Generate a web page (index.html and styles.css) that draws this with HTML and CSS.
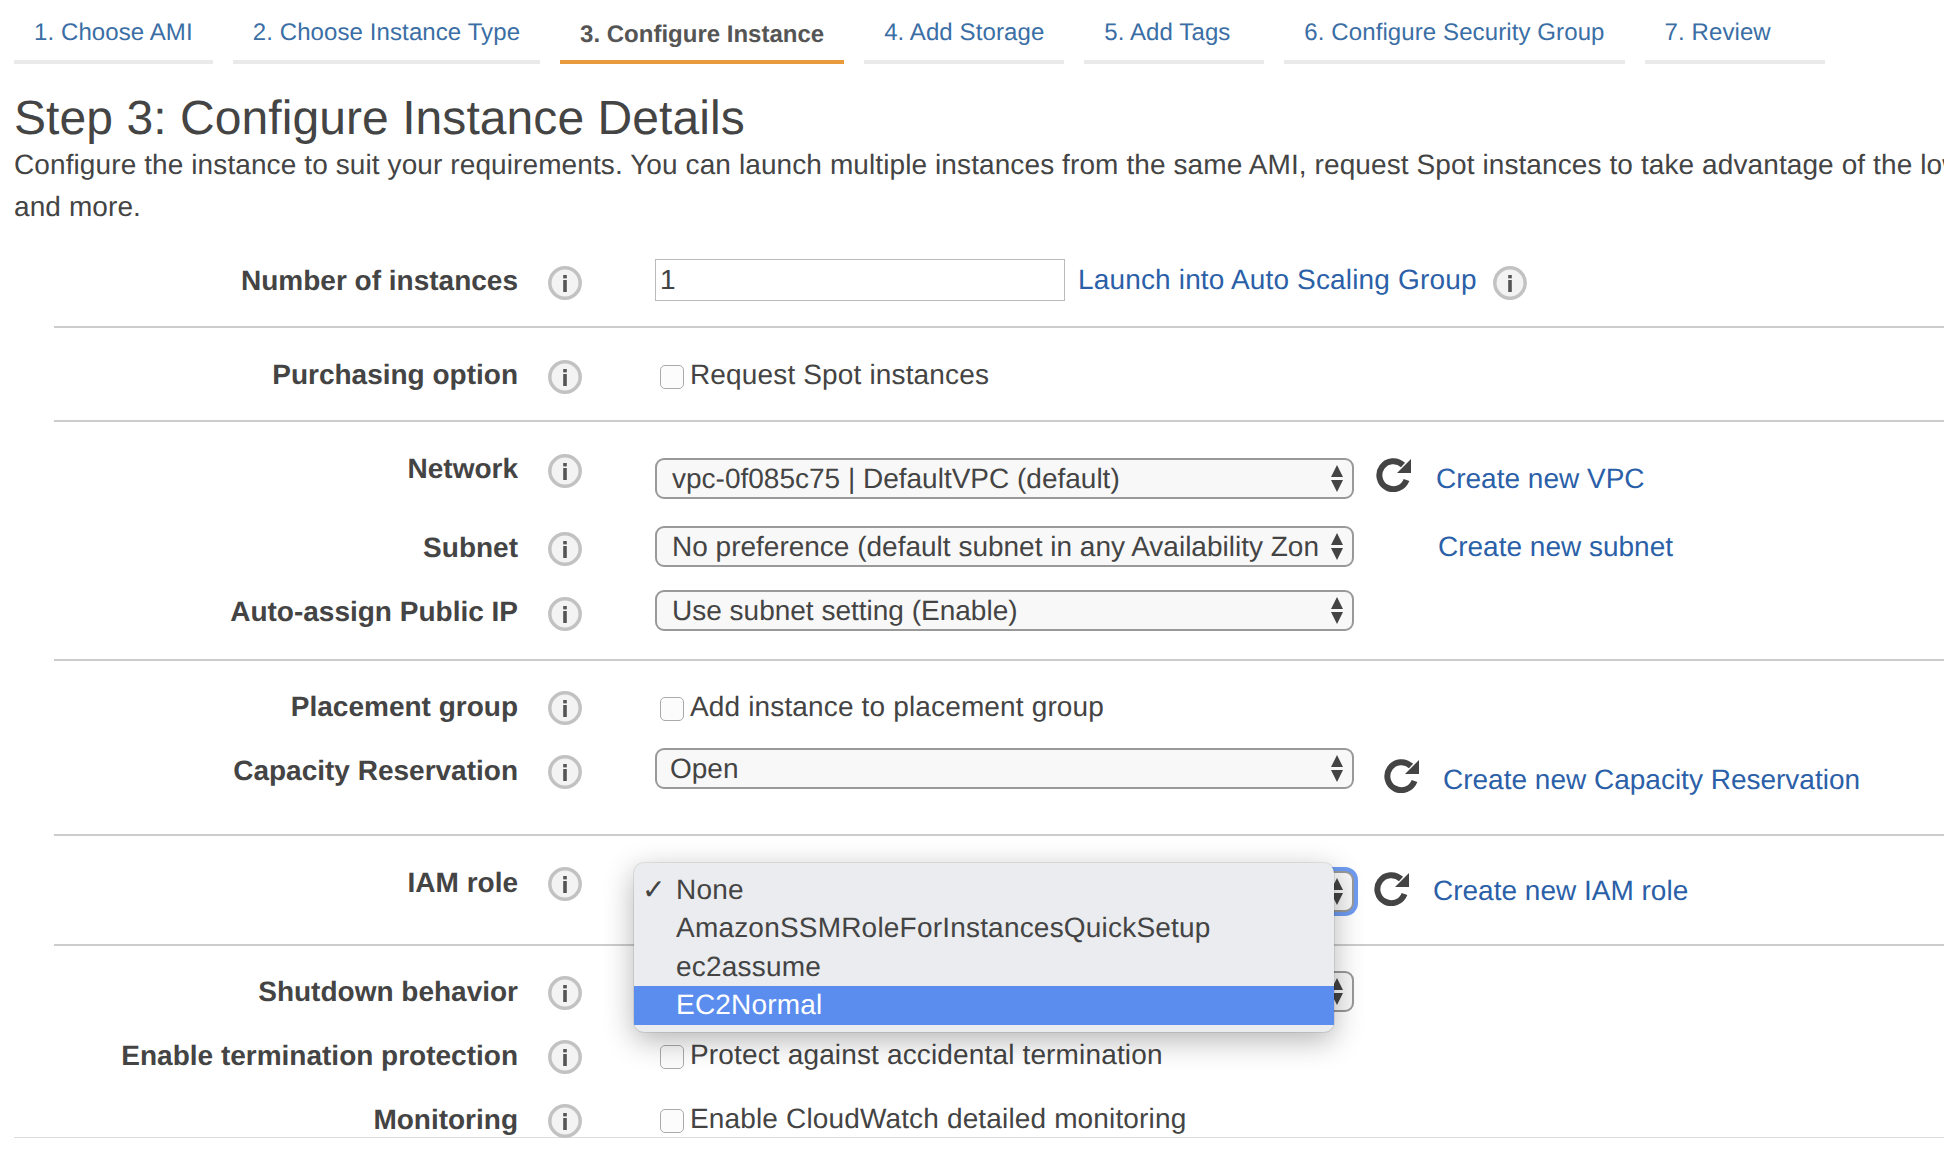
FILE: index.html
```html
<!DOCTYPE html>
<html lang="en">
<head>
    <meta charset="UTF-8">
    <title>Step 3: Configure Instance Details</title>
    <link rel="stylesheet" href="styles.css">
</head>
<body>

<svg class="defs" width="0" height="0">
    <symbol id="info" viewBox="0 0 34 34">
        <circle cx="17" cy="17" r="15.2" fill="#f3f3f3" stroke="#c2c2c2" stroke-width="3.5"/>
        <rect x="15.2" y="14" width="3.6" height="12" fill="#555"/>
        <rect x="15.2" y="9" width="3.6" height="3.4" fill="#555"/>
    </symbol>
    <symbol id="refresh" viewBox="0 0 36 34">
        <path d="M30.5 22a14 14 0 1 1-3.5-15" fill="none" stroke="#444" stroke-width="6"/>
        <path d="M35 1v14h-14z" fill="#444"/>
    </symbol>
    <symbol id="arrows" viewBox="0 0 12 27">
        <path d="M6 0l6 12h-12zM6 27l-6-12h12z" fill="#444"/>
    </symbol>
</svg>

<ul class="tabs">
    <li><a href="#">1. Choose AMI</a></li>
    <li><a href="#">2. Choose Instance Type</a></li>
    <li class="active"><a href="#">3. Configure Instance</a></li>
    <li><a href="#">4. Add Storage</a></li>
    <li><a href="#">5. Add Tags</a></li>
    <li><a href="#">6. Configure Security Group</a></li>
    <li><a href="#">7. Review</a></li>
</ul>

<h1>Step 3: Configure Instance Details</h1>
<p class="intro">Configure the instance to suit your requirements. You can launch multiple instances from the same AMI, request Spot instances to take advantage of the lower pricing, assign an access management role to the instance,<br>and more.</p>

<form class="details">
    <section class="group">
        <div class="row row-instances">
            <label>Number of instances</label>
            <svg class="info"><use href="#info"/></svg>
            <div class="control">
                <input class="count" type="text" value="1">
                <a class="link launch" href="#">Launch into Auto Scaling Group</a>
                <svg class="info info-inline"><use href="#info"/></svg>
            </div>
        </div>
    </section>

    <section class="group group-purchasing">
        <div class="row row-purchasing">
            <label>Purchasing option</label>
            <svg class="info"><use href="#info"/></svg>
            <div class="control control-text"><span class="check"></span>Request Spot instances</div>
        </div>
    </section>

    <section class="group group-network">
        <div class="row row-network">
            <label>Network</label>
            <svg class="info"><use href="#info"/></svg>
            <div class="control">
                <div class="select"><span class="value">vpc-0f085c75 | DefaultVPC (default)</span><svg class="arrows"><use href="#arrows"/></svg></div>
                <svg class="refresh"><use href="#refresh"/></svg>
                <a class="link link-vpc" href="#">Create new VPC</a>
            </div>
        </div>
        <div class="row row-subnet">
            <label>Subnet</label>
            <svg class="info"><use href="#info"/></svg>
            <div class="control">
                <div class="select"><span class="value">No preference (default subnet in any Availability Zone)</span><svg class="arrows"><use href="#arrows"/></svg></div>
                <a class="link link-subnet" href="#">Create new subnet</a>
            </div>
        </div>
        <div class="row row-public-ip">
            <label>Auto-assign Public IP</label>
            <svg class="info"><use href="#info"/></svg>
            <div class="control">
                <div class="select"><span class="value">Use subnet setting (Enable)</span><svg class="arrows"><use href="#arrows"/></svg></div>
            </div>
        </div>
    </section>

    <section class="group group-placement">
        <div class="row row-placement">
            <label>Placement group</label>
            <svg class="info"><use href="#info"/></svg>
            <div class="control control-text"><span class="check"></span>Add instance to placement group</div>
        </div>
        <div class="row row-capacity">
            <label>Capacity Reservation</label>
            <svg class="info"><use href="#info"/></svg>
            <div class="control control-top">
                <div class="select select-open"><span class="value">Open</span><svg class="arrows"><use href="#arrows"/></svg></div>
                <svg class="refresh refresh-capacity"><use href="#refresh"/></svg>
                <a class="link link-capacity" href="#">Create new Capacity Reservation</a>
            </div>
        </div>
    </section>

    <section class="group group-iam">
        <div class="row row-iam">
            <label>IAM role</label>
            <svg class="info"><use href="#info"/></svg>
            <div class="control">
                <div class="select select-focus"><svg class="arrows"><use href="#arrows"/></svg></div>
                <svg class="refresh refresh-iam"><use href="#refresh"/></svg>
                <a class="link link-iam" href="#">Create new IAM role</a>
            </div>
            <ul class="menu">
                <li class="checked">None</li>
                <li>AmazonSSMRoleForInstancesQuickSetup</li>
                <li>ec2assume</li>
                <li class="highlight">EC2Normal</li>
            </ul>
        </div>
    </section>

    <section class="group group-last">
        <div class="row row-shutdown">
            <label>Shutdown behavior</label>
            <svg class="info"><use href="#info"/></svg>
            <div class="control">
                <div class="select"><svg class="arrows"><use href="#arrows"/></svg></div>
            </div>
        </div>
        <div class="row row-termination">
            <label>Enable termination protection</label>
            <svg class="info"><use href="#info"/></svg>
            <div class="control control-text"><span class="check"></span>Protect against accidental termination</div>
        </div>
        <div class="row row-monitoring">
            <label>Monitoring</label>
            <svg class="info"><use href="#info"/></svg>
            <div class="control control-text"><span class="check"></span>Enable CloudWatch detailed monitoring</div>
        </div>
    </section>
    <div class="end-line"></div>
</form>

</body>
</html>
```

FILE: styles.css
```css
html, body {
    height: 100%;
}
body {
    font-family: "Liberation Sans", Arial, sans-serif;
    font-size: 28px;
    color: #444;
    background: white;
    margin: 0;
    overflow: hidden;
    text-rendering: geometricPrecision;
}
a {
    text-decoration: none;
}
.defs {
    position: absolute;
}

/* wizard tabs */
.tabs {
    display: flex;
    gap: 20px;
    list-style: none;
    margin: 0 0 0 14px;
    padding: 0;
    font-size: 24px;
    line-height: 34px;
    letter-spacing: 0.1px;
}
.tabs li {
    min-width: 180px;
    box-sizing: border-box;
    padding: 16px 20px 10px;
    border-bottom: 4px solid #eaeaea;
}
.tabs a {
    color: #3a6ea5;
}
.tabs .active {
    padding: 18px 20px 8px;
    border-bottom-color: #e99a3c;
    letter-spacing: 0;
}
.tabs .active a {
    color: #555;
    font-weight: bold;
}

h1 {
    font-size: 48px;
    font-weight: normal;
    line-height: 51px;
    letter-spacing: 0.07px;
    margin: 29px 0 0 14px;
}
.intro {
    line-height: 42px;
    letter-spacing: 0.1px;
    margin: 0 0 0 14px;
    white-space: nowrap;
}

/* form rows */
.details {
    margin-top: 31px;
}
.group {
    margin-left: 54px;
    border-bottom: 2px solid #ccc;
}
.group-purchasing, .group-network {
    padding-top: 32px;
}
.group-placement {
    padding-top: 30px;
}
.group-iam {
    padding-top: 31px;
}
.group-last {
    padding-top: 25px;
    border-bottom: none;
}
.end-line {
    margin-left: 14px;
    border-bottom: 1px solid #ddd;
}
.row {
    --icon: 0px;
    --ctl: 0px;
    --label: -1px;
    position: relative;
    display: grid;
    grid-template-columns: 464px 64px 1fr;
    align-items: start;
}
.row-instances { --icon: 7px; --label: -2px; height: 67px; }
.row-purchasing { --ctl: -2px; --label: -2px; height: 60px; }
.row-network { --ctl: 4px; --label: -2px; height: 73px; }
.row-subnet { --icon: 5px; --ctl: -1px; height: 64px; }
.row-public-ip { --icon: 6px; --ctl: -1px; --label: -2px; height: 68px; }
.row-placement { --ctl: -1px; height: 58px; }
.row-capacity { --icon: 6px; --ctl: -1px; height: 85px; }
.row-iam { --ctl: 4px; height: 77px; }
.row-shutdown { --icon: 5px; height: 69px; }
.row-termination { --ctl: -2px; height: 64px; }
.row-monitoring { --ctl: -2px; height: 33px; }

.row label {
    font-weight: bold;
    line-height: 34px;
    text-align: right;
    margin-top: calc(var(--icon) + var(--label));
}
.info {
    width: 34px;
    height: 34px;
    justify-self: end;
    margin-top: var(--icon);
}
.control {
    display: flex;
    align-items: center;
    margin: var(--ctl) 0 0 73px;
    line-height: 34px;
    white-space: nowrap;
}
.control-top {
    align-items: flex-start;
}
.control-text {
    letter-spacing: 0.15px;
}

input.count {
    width: 410px;
    height: 42px;
    box-sizing: border-box;
    font: inherit;
    color: inherit;
    padding: 0 4px;
    border: 1px solid #bbb;
    border-radius: 0;
}
.link {
    color: #2b5fa8;
}
.launch {
    margin-left: 13px;
    letter-spacing: 0.16px;
}
.info-inline {
    margin: 6px 0 0 16px;
}
.check {
    width: 24px;
    height: 24px;
    box-sizing: border-box;
    margin: 3px 6px 0 5px;
    border: 1px solid #aaa;
    border-radius: 5px;
    background: #fcfcfc;
}

/* select boxes, the arrows are drawn over the box */
.select {
    position: relative;
    width: 699px;
    height: 41px;
    box-sizing: border-box;
    line-height: 37px;
    background: #f8f8f8;
    border: 2px solid #999;
    border-radius: 9px;
}
.value {
    display: block;
    width: 647px;
    margin-left: 15px;
    overflow: hidden;
}
.select-open {
    line-height: 38px;
}
.select-open .value {
    margin-left: 13px;
}
.select-focus {
    box-shadow: 0 0 0 4px #6f9bf0;
}
.arrows {
    position: absolute;
    right: 9px;
    top: 5px;
    width: 12px;
    height: 27px;
}
.refresh {
    width: 36px;
    height: 34px;
    margin-left: 22px;
    margin-top: -7px;
}
.link-vpc {
    margin-left: 24px;
}
.link-subnet {
    margin-left: 84px;
}
.refresh-capacity {
    margin: 11px 0 0 30px;
}
.link-capacity {
    margin: 15px 0 0 23px;
}
.refresh-iam {
    margin: -6px 0 0 20px;
}
.link-iam {
    margin: -2px 0 0 23px;
}

/* open dropdown of the IAM role select */
.menu {
    position: absolute;
    z-index: 2;
    left: 580px;
    top: -4px;
    width: 700px;
    height: 169px;
    box-sizing: border-box;
    list-style: none;
    margin: 0;
    padding: 8px 0;
    letter-spacing: 0.2px;
    background: #eaecef;
    border-radius: 10px;
    box-shadow: 0 0 0 1px rgba(0, 0, 0, 0.08), 0 8px 30px rgba(0, 0, 0, 0.3);
}
.menu li {
    position: relative;
    height: 38.4px;
    line-height: 38px;
    padding-left: 42px;
}
.menu .checked::before {
    content: "\2713";
    position: absolute;
    left: 8px;
    font-family: "DejaVu Sans", sans-serif;
    font-size: 28px;
}
.menu .highlight {
    background: #5a8dee;
    color: white;
}
```
